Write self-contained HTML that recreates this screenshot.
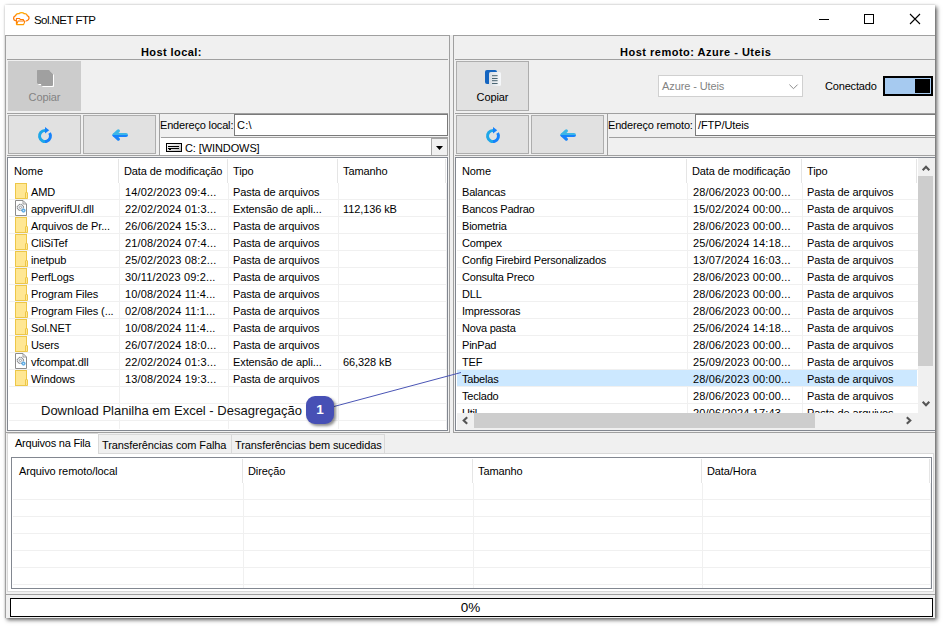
<!DOCTYPE html>
<html lang="pt-BR"><head><meta charset="utf-8"><title>Sol.NET FTP</title>
<style>
*{box-sizing:border-box;margin:0;padding:0}
html,body{width:944px;height:627px;overflow:hidden;background:#fff}
body{position:relative;font-family:"Liberation Sans",sans-serif;font-size:11px;color:#000;letter-spacing:-.1px}
svg{display:block;overflow:visible}
#defs{position:absolute;width:0;height:0}
#win{position:absolute;left:5px;top:5px;width:930px;height:613px;background:#f0f0f0;box-shadow:2px 2px 4px rgba(0,0,0,.62),0 0 2px rgba(0,0,0,.18);overflow:hidden}
#winsh{position:absolute;left:5px;top:5px;width:930px;height:613px;box-shadow:2px 2px 4px rgba(0,0,0,.62),0 0 2px rgba(0,0,0,.18)}
#tb{position:absolute;left:0;top:0;width:930px;height:30px;background:#fff}
.ticon{position:absolute;left:8px;top:7px}
.ttl{position:absolute;left:29px;top:8px;font-size:11.5px;line-height:14px;letter-spacing:-.55px;white-space:pre}
.wc{position:absolute;top:8px}
.panel{position:absolute;top:30px;height:398px;border:1px solid #a0a0a0;background:#f0f0f0;overflow:hidden}
#pl{left:0;width:445px}
#pr{left:448px;width:482px;border-right:0}
#pr .hl{right:0}
.ph{position:absolute;top:10px;font-weight:bold;white-space:pre;line-height:13px;letter-spacing:.42px}
.hl{position:absolute;left:1px;right:1px;height:1px;background:#a0a0a0}
.hl2{position:absolute;height:1px;background:#a0a0a0}
.vl{position:absolute;width:1px;background:#a0a0a0}
.btn{position:absolute;width:73px;background:#e1e1e1;border:1px solid #adadad}
.btn.dis{background:#ccc;border-color:#ccc;color:#838383}
.bi{position:absolute}
.bt{position:absolute;left:0;right:0;text-align:center;line-height:13px}
.lbl{position:absolute;white-space:pre;line-height:13px;letter-spacing:-.17px}
.inp{position:absolute;height:22px;background:#fff;border:1px solid #7a7a7a;padding:4px 0 0 2px;line-height:13px;white-space:pre;letter-spacing:.3px}
.drv{position:absolute;height:17px;background:#fff;line-height:13px}
.drv .dri{position:absolute;left:6px;top:5px}
.drv span{position:absolute;left:25px;top:4px;white-space:pre}
.drv .dbtn{position:absolute;right:0;top:0;width:17px;height:17px;background:#f0f0f0;border:1px solid #a6a6a6;border-bottom:0}
.drv .dbtn svg{position:absolute;left:4px;top:7px}
.cmb{position:absolute;background:#fff;border:1px solid #d0d0d0;color:#838383}
.cmb span{position:absolute;left:3px;top:4px;line-height:13px;white-space:pre}
.cmb svg{position:absolute;right:4px;top:8px}
.tog{position:absolute;width:50px;height:20px;background:#a6caf0;border:2px solid #000}
.tog b{position:absolute;right:1px;top:1px;width:15px;height:14px;background:#000}
.list{position:absolute;background:#fff;border:1px solid #828790;overflow:hidden}
.lh{position:absolute;left:0;top:0;right:0;height:25px;background:#fff}
.lh span{position:absolute;top:7px;line-height:13px;white-space:pre}
.lh i{position:absolute;top:1px;width:1px;height:24px;background:#e5e5e5}
.grid{position:absolute;left:1px;right:0;background:repeating-linear-gradient(to bottom,transparent 0,transparent 16px,#f0f0f0 16px,#f0f0f0 17px)}
.vg{position:absolute;width:1px;background:#f0f0f0}
.clip{position:absolute;left:0;overflow:hidden}
.row{position:absolute;left:0;right:0;height:17px;line-height:17px}
.clip .row{width:461px;right:auto}
.row.sel{background:linear-gradient(#cce8ff,#cce8ff) 1px 0/100% 16px no-repeat}
.row .ri{position:absolute;left:7px;top:0}
.fi{position:absolute;left:7px;top:0;width:12px;height:16px;background:#ffe793;border:1px solid #edc748}
.fi:after{content:"";box-sizing:border-box;position:absolute;left:9px;top:8px;width:3px;height:7px;background:#ffe793;border:1px solid #edc748;border-radius:1px 1px 0 0}
.c{position:absolute;top:1px;white-space:pre}
.dt{letter-spacing:.15px}
.nm{letter-spacing:-.21px}
.vsb,.hsb{position:absolute;background:#f0f0f0}
.vsb svg,.hsb svg{position:absolute}
.th{position:absolute;background:#cdcdcd}
#tabs{position:absolute;left:2px;top:428px;width:927px;height:159px}
.tab{position:absolute;top:1px;height:20px;background:#f0f0f0;border:1px solid #d9d9d9;border-bottom:0;padding:4px 0 0 3px;line-height:13px;white-space:pre;overflow:hidden}
.tab.act{top:0;height:22px;background:#fff;z-index:2;padding:3px 0 0 7px;border-color:#d9d9d9;border-right:0;letter-spacing:-.22px}
#pane{position:absolute;left:0;top:20px;width:927px;height:139px;background:#fff;border:1px solid #d9d9d9}
#lb{position:absolute;left:0;top:428px;width:1px;height:185px;background:#a0a0a0}
#prog{position:absolute;left:5px;top:593px;width:923px;height:19px;background:#fff;border:1px solid #000;text-align:center;font-size:13.5px;line-height:17px;letter-spacing:0;padding-right:2px}
#ann{position:absolute;left:41px;top:403px;font-size:13px;line-height:15px;letter-spacing:0;white-space:pre;color:#111}
#annl{position:absolute;left:0;top:0;pointer-events:none}
#badge{position:absolute;left:306px;top:396px;width:28px;height:28px;border-radius:9px;background:#4750b5;color:#fff;font-weight:bold;font-size:13.5px;line-height:28px;text-align:center;letter-spacing:0;box-shadow:2px 2px 3px rgba(0,0,0,.45)}
</style></head>
<body>
<svg id="defs" width="0" height="0" aria-hidden="true"><defs>
<linearGradient id="g-cloud" x1="0" y1="0" x2="0" y2="14" gradientUnits="userSpaceOnUse"><stop offset="0" stop-color="#ffb400"/><stop offset=".35" stop-color="#ff7400"/><stop offset=".7" stop-color="#ff7a00"/><stop offset="1" stop-color="#ffae00"/></linearGradient>
<linearGradient id="g-lr" x1="0" y1="0" x2="16" y2="0" gradientUnits="userSpaceOnUse"><stop offset=".5" stop-color="#1ea7e8"/><stop offset=".5" stop-color="#1682fb"/></linearGradient>
<linearGradient id="g-tb" x1="0" y1="0" x2="0" y2="16" gradientUnits="userSpaceOnUse"><stop offset=".5" stop-color="#3db6e6"/><stop offset=".5" stop-color="#1682fb"/></linearGradient>
<linearGradient id="g-sheet" x1="0" y1="0" x2="1" y2="0"><stop offset="0" stop-color="#d9dde2"/><stop offset="1" stop-color="#f6f8fa"/></linearGradient>
<linearGradient id="g-drv" x1="0" y1="0" x2="1" y2="1"><stop offset="0" stop-color="#fff"/><stop offset="1" stop-color="#b8b8b8"/></linearGradient>
</defs></svg>
<div id="win">
<div id="tb"><svg class="ticon" width="17" height="14" viewBox="0 0 17 14"><path d="M2.4 8.7C0 7.8-.1 4.5 2.6 3.7C3 2 4.8 1.3 6 1.7C7.2.2 10 .1 11.2 1.7C12.6 1.3 14 2.3 14.3 3.7C16.8 4.4 16.7 7.9 13.6 8.9" fill="none" stroke="url(#g-cloud)" stroke-width="1.3" stroke-linecap="round"/><path d="M3.4 12.5V6.4H6.4L7.2 7.4H10.4V8.9M3.6 12.6L5.1 9H12L10.6 12.6Z" fill="none" stroke="url(#g-cloud)" stroke-width="1.05" stroke-linejoin="round"/></svg><span class="ttl">Sol.NET FTP</span><svg class="wc" style="left:813px" width="12" height="12" viewBox="0 0 12 12"><path d="M1 6.5H11" stroke="#000" stroke-width="1" fill="none"/></svg><svg class="wc" style="left:858px" width="12" height="12" viewBox="0 0 12 12"><rect x="1.5" y="1.5" width="9" height="9" stroke="#000" stroke-width="1" fill="none"/></svg><svg class="wc" style="left:904px" width="12" height="12" viewBox="0 0 12 12"><path d="M1 1L11 11M11 1L1 11" stroke="#000" stroke-width="1.1" fill="none"/></svg></div>
<div class="panel" id="pl">
<div class="ph" style="left:135px">Host local:</div>
<div class="hl" style="top:23px"></div><div class="hl" style="top:77px"></div><div class="hl" style="top:119px"></div>
<div class="btn dis" style="left:2px;top:25px;height:50px"><svg class="bi" style="left:27px;top:7px" width="20" height="20" viewBox="0 0 20 20"><path d="M2.5 2H14L18 6V17.3L17.3 18H6.5L6 16H3L2 15V2.5Z" fill="#fff"/><path d="M1.5 1H13L17 5V16.3L16.3 17H5.5L5 15H2L1 14V1.5Z" fill="#a0a0a0"/></svg><span class="bt" style="top:29px">Copiar</span></div>
<div class="btn" style="left:2px;top:79px;height:39px"><svg class="bi" style="left:28px;top:12px" width="16" height="16" viewBox="0 0 16 16"><path d="M12.6 5A5.5 5.5 0 1 1 8 2.5" fill="none" stroke="url(#g-lr)" stroke-width="3"/><path d="M8 -1L12.2 2.2L8 5.6Z" fill="#1682fb"/></svg></div>
<div class="btn" style="left:77px;top:79px;height:39px"><svg class="bi" style="left:26.5px;top:11px" width="16" height="16" viewBox="0 0 16 16"><path d="M7.3 3.9L3 8L7.3 12.1" fill="none" stroke="url(#g-tb)" stroke-width="3.3" stroke-linecap="round" stroke-linejoin="round"/><path d="M3.5 8H15" fill="none" stroke="url(#g-tb)" stroke-width="4" stroke-linecap="round"/></svg></div>
<div class="vl" style="left:153px;top:78px;height:41px"></div>
<div class="lbl" style="left:154px;top:83px">Endereço local:</div>
<div class="inp" style="left:228px;top:78px;width:214px">C:\</div>
<div class="hl2" style="left:155px;top:101px;right:1px"></div>
<div class="drv" style="left:154px;top:102px;width:288px"><svg class="dri" width="16" height="9" viewBox="0 0 16 9"><rect x=".5" y=".5" width="15" height="8" fill="url(#g-drv)" stroke="#000" stroke-width="1"/><path d="M2 3.5H13M2 5.5H13M3 6.5H5" stroke="#000" stroke-width="1" fill="none"/></svg><span>C: [WINDOWS]</span><div class="dbtn"><svg width="7" height="4" viewBox="0 0 7 4"><path d="M0 0H7L3.5 4Z" fill="#000"/></svg></div></div>
<div class="list" style="left:1px;top:121px;width:441px;height:274px">
<div class="lh"><span style="left:6px">Nome</span><i style="left:110px"></i><span style="left:116px">Data de modificação</span><i style="left:219px"></i><span style="left:225px">Tipo</span><i style="left:329px"></i><span style="left:335px">Tamanho</span><i style="left:437px"></i></div>
<div class="grid" style="top:25px;height:246px"></div><div class="vg" style="left:111px;top:25px;height:246px"></div><div class="vg" style="left:220px;top:25px;height:246px"></div><div class="vg" style="left:330px;top:25px;height:246px"></div><div class="vg" style="left:438px;top:25px;height:246px"></div>
<div class="row" style="top:25px"><i class="fi"></i><span class="c" style="left:23px">AMD</span><span class="c dt" style="left:117px">14/02/2023 09:4...</span><span class="c" style="left:225px">Pasta de arquivos</span></div>
<div class="row" style="top:42px"><svg class="ri" width="13" height="16" viewBox="0 0 13 16"><path d="M.5 .5H8L11.5 4V15.5H.5Z" fill="#fff" stroke="#8c8c8c" stroke-width="1"/><path d="M8 .8V4H11.2" fill="none" stroke="#9a9a9a" stroke-width="1"/><circle cx="5.4" cy="7.4" r="3.1" fill="#e9eef3" stroke="#7d7d7d" stroke-width="1.2" stroke-dasharray="1 .62"/><circle cx="5.4" cy="7.4" r="1.1" fill="#fff" stroke="#8e8e8e" stroke-width=".7"/><circle cx="8.5" cy="10.6" r="2.1" fill="#62aee6"/><circle cx="8.5" cy="10.6" r=".7" fill="#d6ecfa"/></svg><span class="c" style="left:23px">appverifUI.dll</span><span class="c dt" style="left:117px">22/02/2024 01:3...</span><span class="c" style="left:225px">Extensão de apli...</span><span class="c sz" style="left:335px">112,136 kB</span></div>
<div class="row" style="top:59px"><i class="fi"></i><span class="c" style="left:23px">Arquivos de Pr...</span><span class="c dt" style="left:117px">26/06/2024 15:3...</span><span class="c" style="left:225px">Pasta de arquivos</span></div>
<div class="row" style="top:76px"><i class="fi"></i><span class="c" style="left:23px">CliSiTef</span><span class="c dt" style="left:117px">21/08/2024 07:4...</span><span class="c" style="left:225px">Pasta de arquivos</span></div>
<div class="row" style="top:93px"><i class="fi"></i><span class="c" style="left:23px">inetpub</span><span class="c dt" style="left:117px">25/02/2023 08:2...</span><span class="c" style="left:225px">Pasta de arquivos</span></div>
<div class="row" style="top:110px"><i class="fi"></i><span class="c" style="left:23px">PerfLogs</span><span class="c dt" style="left:117px">30/11/2023 09:2...</span><span class="c" style="left:225px">Pasta de arquivos</span></div>
<div class="row" style="top:127px"><i class="fi"></i><span class="c" style="left:23px">Program Files</span><span class="c dt" style="left:117px">10/08/2024 11:4...</span><span class="c" style="left:225px">Pasta de arquivos</span></div>
<div class="row" style="top:144px"><i class="fi"></i><span class="c" style="left:23px">Program Files (...</span><span class="c dt" style="left:117px">02/08/2024 11:1...</span><span class="c" style="left:225px">Pasta de arquivos</span></div>
<div class="row" style="top:161px"><i class="fi"></i><span class="c" style="left:23px">Sol.NET</span><span class="c dt" style="left:117px">10/08/2024 11:4...</span><span class="c" style="left:225px">Pasta de arquivos</span></div>
<div class="row" style="top:178px"><i class="fi"></i><span class="c" style="left:23px">Users</span><span class="c dt" style="left:117px">26/07/2024 18:0...</span><span class="c" style="left:225px">Pasta de arquivos</span></div>
<div class="row" style="top:195px"><svg class="ri" width="13" height="16" viewBox="0 0 13 16"><path d="M.5 .5H8L11.5 4V15.5H.5Z" fill="#fff" stroke="#8c8c8c" stroke-width="1"/><path d="M8 .8V4H11.2" fill="none" stroke="#9a9a9a" stroke-width="1"/><circle cx="5.4" cy="7.4" r="3.1" fill="#e9eef3" stroke="#7d7d7d" stroke-width="1.2" stroke-dasharray="1 .62"/><circle cx="5.4" cy="7.4" r="1.1" fill="#fff" stroke="#8e8e8e" stroke-width=".7"/><circle cx="8.5" cy="10.6" r="2.1" fill="#62aee6"/><circle cx="8.5" cy="10.6" r=".7" fill="#d6ecfa"/></svg><span class="c" style="left:23px">vfcompat.dll</span><span class="c dt" style="left:117px">22/02/2024 01:3...</span><span class="c" style="left:225px">Extensão de apli...</span><span class="c sz" style="left:335px">66,328 kB</span></div>
<div class="row" style="top:212px"><i class="fi"></i><span class="c" style="left:23px">Windows</span><span class="c dt" style="left:117px">13/08/2024 19:3...</span><span class="c" style="left:225px">Pasta de arquivos</span></div>
</div>
</div>
<div class="panel" id="pr">
<div class="ph" style="left:166px;letter-spacing:.5px">Host remoto: Azure - Uteis</div>
<div class="hl" style="top:23px"></div><div class="hl" style="top:77px"></div><div class="hl" style="top:119px"></div>
<div class="btn" style="left:2px;top:25px;height:50px"><svg class="bi" style="left:27px;top:7px" width="18" height="18" viewBox="0 0 18 18"><rect x="1" y="1" width="12" height="14" rx="2" fill="#1565c0"/><rect x="5" y="3" width="12" height="14" rx="1.6" fill="url(#g-sheet)"/><path d="M8 6.7H13.6M8 9.5H13.6M8 11.7H13.6M8 14.5H13.6" stroke="#4a6572" stroke-width="1" fill="none"/></svg><span class="bt" style="top:29px">Copiar</span></div>
<div class="cmb" style="left:204px;top:39px;width:145px;height:22px"><span>Azure - Uteis</span><svg width="9" height="6" viewBox="0 0 9 6"><path d="M.4 .6L4.5 4.7L8.6 .6" stroke="#8c8c8c" stroke-width="1" fill="none"/></svg></div>
<div class="lbl" style="left:371px;top:44px">Conectado</div>
<div class="tog" style="left:429px;top:40px"><b></b></div>
<div class="btn" style="left:2px;top:79px;height:39px"><svg class="bi" style="left:28px;top:12px" width="16" height="16" viewBox="0 0 16 16"><path d="M12.6 5A5.5 5.5 0 1 1 8 2.5" fill="none" stroke="url(#g-lr)" stroke-width="3"/><path d="M8 -1L12.2 2.2L8 5.6Z" fill="#1682fb"/></svg></div>
<div class="btn" style="left:77px;top:79px;height:39px"><svg class="bi" style="left:26.5px;top:11px" width="16" height="16" viewBox="0 0 16 16"><path d="M7.3 3.9L3 8L7.3 12.1" fill="none" stroke="url(#g-tb)" stroke-width="3.3" stroke-linecap="round" stroke-linejoin="round"/><path d="M3.5 8H15" fill="none" stroke="url(#g-tb)" stroke-width="4" stroke-linecap="round"/></svg></div>
<div class="vl" style="left:153px;top:78px;height:41px"></div>
<div class="lbl" style="left:154px;top:83px">Endereço remoto:</div>
<div class="inp" style="left:241px;top:78px;width:242px;padding-left:2px;letter-spacing:-.1px">/FTP/Uteis</div>
<div class="hl2" style="left:155px;top:101px;right:0"></div>
<div class="list" style="left:1px;top:121px;width:482px;height:274px">
<div class="lh"><span style="left:6px">Nome</span><i style="left:230px"></i><span style="left:236px">Data de modificação</span><i style="left:345px"></i><span style="left:351px">Tipo</span><i style="left:460px"></i></div>
<div class="grid" style="top:25px;height:230px;width:461px"></div><div class="vg" style="left:231px;top:25px;height:230px"></div><div class="vg" style="left:346px;top:25px;height:230px"></div>
<div class="clip" style="top:25px;height:230px;width:461px"><div class="row" style="top:0px"><span class="c nm" style="left:6px">Balancas</span><span class="c dt" style="left:237px">28/06/2023 00:00...</span><span class="c" style="left:351px">Pasta de arquivos</span></div>
<div class="row" style="top:17px"><span class="c nm" style="left:6px">Bancos Padrao</span><span class="c dt" style="left:237px">15/02/2024 00:00...</span><span class="c" style="left:351px">Pasta de arquivos</span></div>
<div class="row" style="top:34px"><span class="c nm" style="left:6px">Biometria</span><span class="c dt" style="left:237px">28/06/2023 00:00...</span><span class="c" style="left:351px">Pasta de arquivos</span></div>
<div class="row" style="top:51px"><span class="c nm" style="left:6px">Compex</span><span class="c dt" style="left:237px">25/06/2024 14:18...</span><span class="c" style="left:351px">Pasta de arquivos</span></div>
<div class="row" style="top:68px"><span class="c nm" style="left:6px">Config Firebird Personalizados</span><span class="c dt" style="left:237px">13/07/2024 16:03...</span><span class="c" style="left:351px">Pasta de arquivos</span></div>
<div class="row" style="top:85px"><span class="c nm" style="left:6px">Consulta Preco</span><span class="c dt" style="left:237px">28/06/2023 00:00...</span><span class="c" style="left:351px">Pasta de arquivos</span></div>
<div class="row" style="top:102px"><span class="c nm" style="left:6px">DLL</span><span class="c dt" style="left:237px">28/06/2023 00:00...</span><span class="c" style="left:351px">Pasta de arquivos</span></div>
<div class="row" style="top:119px"><span class="c nm" style="left:6px">Impressoras</span><span class="c dt" style="left:237px">28/06/2023 00:00...</span><span class="c" style="left:351px">Pasta de arquivos</span></div>
<div class="row" style="top:136px"><span class="c nm" style="left:6px">Nova pasta</span><span class="c dt" style="left:237px">25/06/2024 14:18...</span><span class="c" style="left:351px">Pasta de arquivos</span></div>
<div class="row" style="top:153px"><span class="c nm" style="left:6px">PinPad</span><span class="c dt" style="left:237px">28/06/2023 00:00...</span><span class="c" style="left:351px">Pasta de arquivos</span></div>
<div class="row" style="top:170px"><span class="c nm" style="left:6px">TEF</span><span class="c dt" style="left:237px">25/09/2023 00:00...</span><span class="c" style="left:351px">Pasta de arquivos</span></div>
<div class="row sel" style="top:187px"><span class="c nm" style="left:6px">Tabelas</span><span class="c dt" style="left:237px">28/06/2023 00:00...</span><span class="c" style="left:351px">Pasta de arquivos</span></div>
<div class="row" style="top:204px"><span class="c nm" style="left:6px">Teclado</span><span class="c dt" style="left:237px">28/06/2023 00:00...</span><span class="c" style="left:351px">Pasta de arquivos</span></div>
<div class="row" style="top:221px"><span class="c nm" style="left:6px">Util</span><span class="c dt" style="left:237px">20/06/2024 17:43...</span><span class="c" style="left:351px">Pasta de arquivos</span></div>
</div>
<div class="vsb" style="left:462px;top:0;width:20px;height:255px"><svg style="left:4px;top:7px" width="8" height="6" viewBox="0 0 8 6"><path d="M.7 5.2L4 1.7L7.3 5.2" stroke="#555" stroke-width="2.1" fill="none"/></svg><div class="th" style="left:0;top:18px;width:15px;height:190px"></div><svg style="left:4px;top:243px" width="8" height="6" viewBox="0 0 8 6"><path d="M.7 .8L4 4.3L7.3 .8" stroke="#555" stroke-width="2.1" fill="none"/></svg></div>
<div class="hsb" style="left:1px;top:255px;width:482px;height:17px"><svg style="left:5px;top:4px" width="6" height="8" viewBox="0 0 6 8"><path d="M5.2 .2L1.7 3.5L5.2 6.8" stroke="#555" stroke-width="2.1" fill="none"/></svg><div class="th" style="left:17px;top:0;width:341px;height:15px"></div><svg style="left:449px;top:4px" width="6" height="8" viewBox="0 0 6 8"><path d="M.8 .2L4.3 3.5L.8 6.8" stroke="#555" stroke-width="2.1" fill="none"/></svg></div>
</div>
</div>
<div id="tabs">
<div class="tab act" style="left:0;width:91px">Arquivos na Fila</div><div class="tab" style="left:91px;width:134px">Transferências com Falha</div><div class="tab" style="left:224px;width:154px">Transferências bem sucedidas</div>
<div id="pane"><div class="list" style="left:3px;top:3px;width:921px;height:132px">
<div class="lh"><span style="left:7px">Arquivo remoto/local</span><i style="left:230px"></i><span style="left:236px">Direção</span><i style="left:460px"></i><span style="left:466px">Tamanho</span><i style="left:689px"></i><span style="left:695px">Data/Hora</span><i style="left:917px"></i></div>
<div class="grid" style="top:25px;height:105px"></div><div class="vg" style="left:231px;top:25px;height:105px"></div><div class="vg" style="left:461px;top:25px;height:105px"></div><div class="vg" style="left:690px;top:25px;height:105px"></div><div class="vg" style="left:918px;top:25px;height:105px"></div>
</div></div>
</div>
<div class="hl" style="top:589px;left:1px;right:0;position:absolute"></div>
<div id="lb"></div><div id="prog">0%</div>
</div>
<div id="ann">Download Planilha em Excel - Desagregação</div>
<svg id="annl" width="944" height="627" viewBox="0 0 944 627"><path d="M334 406.5L461 372.5" stroke="#4a55b5" stroke-width="1" fill="none"/></svg>
<div id="badge">1</div>
</body></html>
